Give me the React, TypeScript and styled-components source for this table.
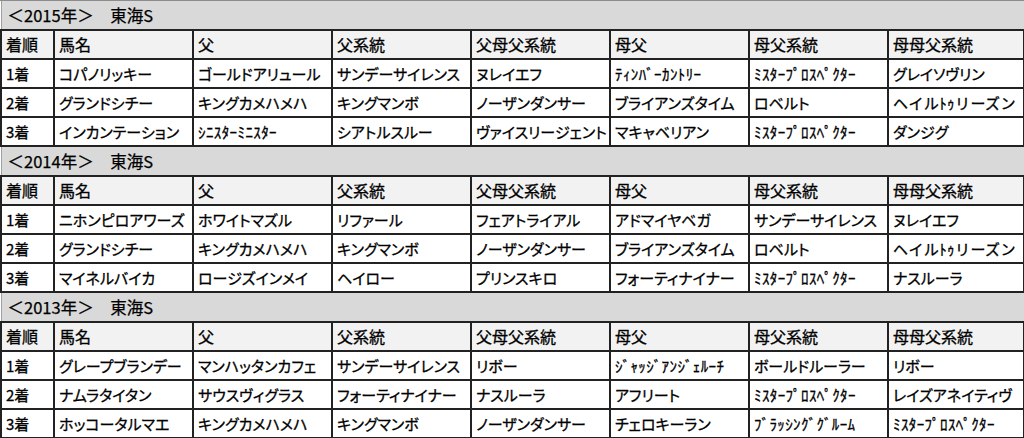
import React from 'react'
import styled, { createGlobalStyle } from 'styled-components'

const GlobalStyle = createGlobalStyle`
  html, body {
    margin: 0;
    padding: 0;
    background: #ffffff;
  }
  body {
    font-family: "Noto Sans CJK JP", "Noto Sans", sans-serif;
    color: #000;
  }
`

interface IRace {
  title: string
  rows: string[][]
}

const races: IRace[] = [
  {
    title: '＜2015年＞　東海S',
    rows: [
      ['1着', 'コパノリッキー', 'ゴールドアリュール', 'サンデーサイレンス', 'ヌレイエフ', 'ﾃｨﾝﾊﾞｰｶﾝﾄﾘｰ', 'ﾐｽﾀｰﾌﾟﾛｽﾍﾟｸﾀｰ', 'グレイソヴリン'],
      ['2着', 'グランドシチー', 'キングカメハメハ', 'キングマンボ', 'ノーザンダンサー', 'ブライアンズタイム', 'ロベルト', 'ヘイルﾄｩリーズン'],
      ['3着', 'インカンテーション', 'ｼﾆｽﾀｰﾐﾆｽﾀｰ', 'シアトルスルー', 'ヴァイスリージェント', 'マキャベリアン', 'ﾐｽﾀｰﾌﾟﾛｽﾍﾟｸﾀｰ', 'ダンジグ'],
    ],
  },
  {
    title: '＜2014年＞　東海S',
    rows: [
      ['1着', 'ニホンピロアワーズ', 'ホワイトマズル', 'リファール', 'フェアトライアル', 'アドマイヤベガ', 'サンデーサイレンス', 'ヌレイエフ'],
      ['2着', 'グランドシチー', 'キングカメハメハ', 'キングマンボ', 'ノーザンダンサー', 'ブライアンズタイム', 'ロベルト', 'ヘイルﾄｩリーズン'],
      ['3着', 'マイネルバイカ', 'ロージズインメイ', 'ヘイロー', 'プリンスキロ', 'フォーティナイナー', 'ﾐｽﾀｰﾌﾟﾛｽﾍﾟｸﾀｰ', 'ナスルーラ'],
    ],
  },
  {
    title: '＜2013年＞　東海S',
    rows: [
      ['1着', 'グレープブランデー', 'マンハッタンカフェ', 'サンデーサイレンス', 'リボー', 'ｼﾞｬｯｼﾞｱﾝｼﾞｪﾙｰﾁ', 'ボールドルーラー', 'リボー'],
      ['2着', 'ナムラタイタン', 'サウスヴィグラス', 'フォーティナイナー', 'ナスルーラ', 'アフリート', 'ﾐｽﾀｰﾌﾟﾛｽﾍﾟｸﾀｰ', 'レイズアネイティヴ'],
      ['3着', 'ホッコータルマエ', 'キングカメハメハ', 'キングマンボ', 'ノーザンダンサー', 'チェロキーラン', 'ﾌﾞﾗｯｼﾝｸﾞｸﾞﾙｰﾑ', 'ﾐｽﾀｰﾌﾟﾛｽﾍﾟｸﾀｰ'],
    ],
  },
]

const headers = ['着順', '馬名', '父', '父系統', '父母父系統', '母父', '母父系統', '母母父系統']
const colWidths = [53, 139, 139, 139, 139, 139, 139, 136]

// half-width katakana keep their own width, full-width get proportional spacing
const isHalfWidth = (text: string) => /[\uFF61-\uFF9F]/.test(text)

const Sheet = styled.div`
  width: 1024px;
  height: 438px;
  overflow: hidden;
  border-top: 1px solid #8c8c8c;
  background: #ffffff;
`

const Table = styled.table`
  border-collapse: collapse;
  table-layout: fixed;
  width: 1023px;
`

const Col = styled.col<{ $width: number }>`
  width: ${({ $width }) => $width}px;
`

const TitleCell = styled.td`
  height: 28px;
  padding: 0 0 0 6px;
  background: #d9d9d9;
  border-left: 1px solid #a0a0a0;
  border-bottom: 2px solid #222;
  font-size: 16.5px;
  line-height: 27px;
  white-space: nowrap;
  -webkit-text-stroke: 0.25px #000;
`

const Cell = styled.td<{ $head?: boolean; $half?: boolean }>`
  height: 27px;
  padding: 0 0 0 4px;
  background: ${({ $head }) => ($head ? '#f2f2f2' : '#ffffff')};
  border: 2px solid #222;
  font-size: ${({ $head }) => ($head ? '16px' : '15px')};
  line-height: 27px;
  white-space: nowrap;
  overflow: visible;
  font-feature-settings: ${({ $half }) => ($half ? 'normal' : "'palt'")};
  letter-spacing: ${({ $half }) => ($half ? '0.4px' : '0')};
  -webkit-text-stroke: 0.3px #000;
`

const Race: React.FC<IRace> = ({ title, rows }) => (
  <>
    <tr>
      <TitleCell colSpan={8}>{title}</TitleCell>
    </tr>
    <tr>
      {headers.map((h) => (
        <Cell key={h} $head>
          {h}
        </Cell>
      ))}
    </tr>
    {rows.map((row) => (
      <tr key={row[0] + row[1]}>
        {row.map((text, i) => (
          <Cell key={i} $half={isHalfWidth(text)}>
            {text}
          </Cell>
        ))}
      </tr>
    ))}
  </>
)

const App: React.FC = () => {
  return (
    <>
      <GlobalStyle />
      <Sheet>
        <Table>
          <colgroup>
            {colWidths.map((w, i) => (
              <Col key={i} $width={w} />
            ))}
          </colgroup>
          <tbody>
            {races.map((race) => (
              <Race key={race.title} {...race} />
            ))}
          </tbody>
        </Table>
      </Sheet>
    </>
  )
}

export default App
